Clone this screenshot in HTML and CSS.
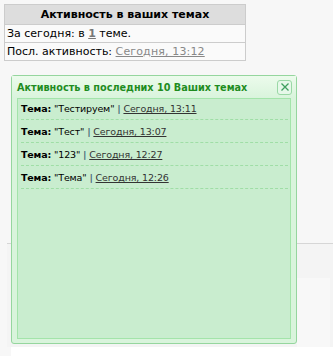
FILE: index.html
```html
<!DOCTYPE html>
<html lang="ru">
<head>
<meta charset="utf-8">
<title>Активность</title>
<link rel="stylesheet" href="styles.css">
</head>
<body>
<div class="page">
  <table class="stats">
    <tr><th>Активность в ваших темах</th></tr>
    <tr><td>За сегодня: в <a class="num" href="#">1</a> теме.</td></tr>
    <tr><td>Посл. активность: <a class="grey" href="#">Сегодня, 13:12</a></td></tr>
  </table>
  <div class="under">
    <div class="under-box"></div>
  </div>
  <div class="bottom-strip"></div>

  <div class="popup">
    <div class="popup-head">
      <span class="popup-title">Активность в последних 10 Ваших темах</span>
      <span class="close">
        <svg width="10" height="10" viewBox="0 0 10 10"><path d="M1.5 1.5 L8.5 8.5 M8.5 1.5 L1.5 8.5" stroke="#3f9f5f" stroke-width="1.3" fill="none"/></svg>
      </span>
    </div>
    <div class="popup-body">
      <div class="item"><b>Тема:</b> "Тестируем" <span class="bar">|</span> <a href="#">Сегодня, 13:11</a></div>
      <div class="item"><b>Тема:</b> "Тест" <span class="bar">|</span> <a href="#">Сегодня, 13:07</a></div>
      <div class="item"><b>Тема:</b> "123" <span class="bar">|</span> <a href="#">Сегодня, 12:27</a></div>
      <div class="item"><b>Тема:</b> "Тема" <span class="bar">|</span> <a href="#">Сегодня, 12:26</a></div>
    </div>
  </div>
</div>
</body>
</html>
```
FILE: styles.css
```css
html, body {
  margin: 0;
  padding: 0;
  background: #f7f7f7;
}
body {
  font-family: "DejaVu Sans", Verdana, sans-serif;
  font-size: 11px;
  color: #000;
}
.page {
  position: relative;
  width: 333px;
  height: 356px;
  overflow: hidden;
  padding-top: 4px;
  box-sizing: border-box;
}
.stats {
  margin-left: 4px;
  width: 242px;
  border-collapse: collapse;
  background: #fafafa;
}
.stats th, .stats td {
  border: 1px solid #cccccc;
  padding: 0 2px;
  text-align: left;
  font-size: 11px;
  height: 17px;
  white-space: nowrap;
}
.stats th {
  background: #dddddd;
  text-align: center;
  font-weight: bold;
  height: 19px;
}
.stats a.num {
  color: #777;
  font-weight: bold;
}
.stats a.grey {
  color: #888;
  letter-spacing: 0.15px;
}
.under {
  margin-top: 182px;
  margin-left: 7px;
  border-top: 1px solid #d6d6d6;
  height: 103px;
  display: flex;
  justify-content: flex-end;
  background: #f4f4f4;
}
.under-box {
  margin-top: 34px;
  margin-right: 3px;
  width: 33px;
  background: #f8f8f8;
}
.bottom-strip {
  margin-left: 11px;
  height: 12px;
  background: #ffffff;
}
.popup {
  position: absolute;
  left: 11px;
  top: 75px;
  width: 286px;
  height: 269px;
  box-sizing: border-box;
  border: 1px solid #95d69e;
  border-radius: 3px;
  background: #d9f4dc;
  padding: 0 5px 4px 5px;
  display: flex;
  flex-direction: column;
}
.popup-head {
  height: 22px;
  display: flex;
  align-items: center;
  justify-content: space-between;
  background: linear-gradient(#ecfbec, #d9f4dc);
  margin: 0 -5px;
  padding: 0 4px 0 5px;
}
.popup-title {
  color: #1f8c1f;
  font-weight: bold;
  font-size: 9.7px;
}
.close {
  width: 13px;
  height: 13px;
  border: 1px solid #9ad8a6;
  border-radius: 3px;
  background: #e6f8e9;
  display: flex;
  align-items: center;
  justify-content: center;
}
.popup-body {
  flex: 1;
  border: 1px solid #a3e4aa;
  background: #c9edcf;
  padding: 0 2px 0 3px;
}
.item {
  font-size: 9.5px;
  letter-spacing: -0.15px;
  line-height: 21px;
  padding-top: 1px;
  border-bottom: 1px dashed #9fdea6;
  white-space: nowrap;
}
.item:first-child {
  padding-top: 0;
  line-height: 20px;
}
.item a {
  color: #333;
}
.bar {
  color: #4a6a7a;
  font-weight: bold;
}
```
